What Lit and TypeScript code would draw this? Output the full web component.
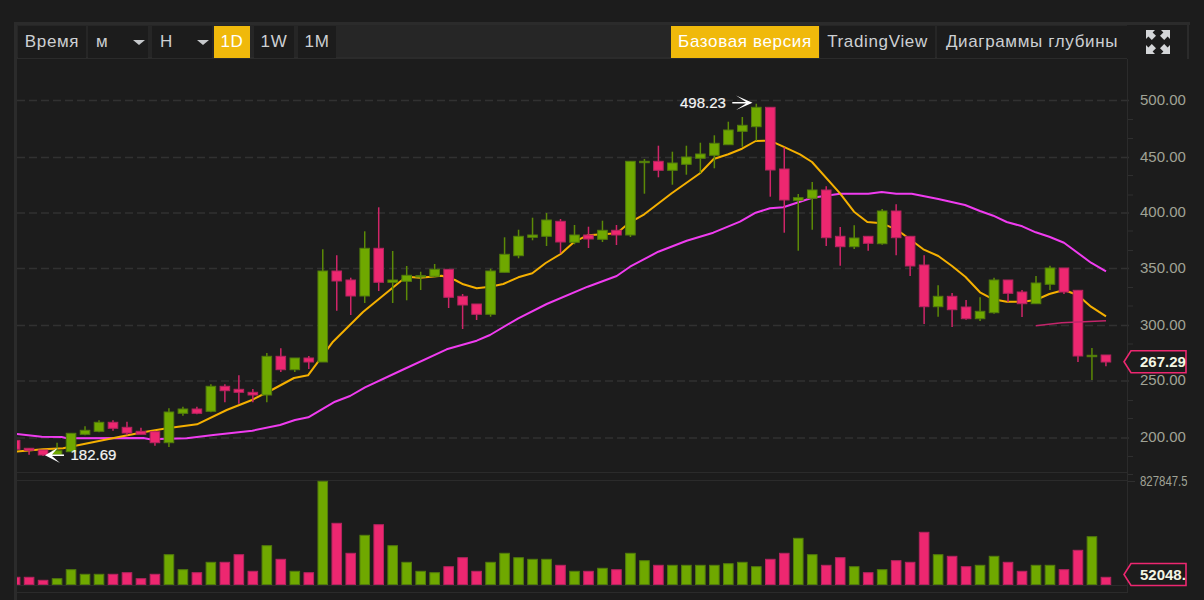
import { LitElement, html, svg, css } from "lit";
import { customElement } from "lit/decorators.js";

type C = [number, number, number, number, string];
const candles: C[] = [
  [440.3,449.3,440.3,449.3,"r"],[448.3,450.3,448.3,454.7,"r"],[450,455,450,456,"r"],[450.7,454.7,442.7,455,"g"],
  [433.3,451.7,433.3,451.7,"g"],[430.3,434.3,426.3,435.3,"g"],[422.3,431.3,420.3,432.3,"g"],[422.3,428.3,420.3,430.7,"r"],
  [427.3,433,421.7,435.3,"r"],[431.3,434.3,427.7,434.3,"r"],[431.7,442.7,430.7,445.7,"r"],[412,442.7,408.3,447,"g"],
  [409,413.3,406.7,415.7,"g"],[409,413.3,406.7,414.3,"r"],[386.3,411.3,384.3,412.3,"g"],[386.3,390.7,384.3,402.3,"r"],
  [389.3,392.3,375.3,403.7,"r"],[392.3,395,389,402.3,"r"],[356.3,395,353,402.3,"g"],[356.3,369.7,348.3,372,"r"],
  [358,369.7,358,372,"g"],[358,362,356,369,"r"],[271,362,249.3,362,"g"],[271,281,255.3,310.7,"r"],
  [280,296,277.7,315,"r"],[248.3,296,231.3,303,"g"],[248.3,282.3,207.3,291,"r"],[280,282.3,251,303,"g"],
  [275.3,281.3,266,300.3,"g"],[275.7,277,271.7,290,"g"],[269.3,276.3,264,277.3,"g"],[269.3,297.3,269.3,308,"r"],
  [296.3,305,294,329,"r"],[304,314.3,304,320,"r"],[271,314.3,268.7,316.7,"g"],[254.3,272.3,237.3,272.3,"g"],
  [236.3,255.7,229.7,258.3,"g"],[235,237.3,217.7,240.3,"g"],[220,236.3,213,246,"g"],[221.3,242,219,253.3,"r"],
  [235,242.3,225,244.3,"g"],[235,239,226.7,248,"r"],[230.3,239.3,220.7,242,"g"],[230.3,235,225,245,"r"],
  [161.3,235,161.3,237,"g"],[161.3,162.7,159,193.7,"g"],[161.3,170.3,145.7,177.3,"r"],[163,170.3,151.7,184.7,"g"],
  [157,164.3,145.7,174.7,"g"],[154,158.3,142.7,173.3,"g"],[143.3,155.3,135.3,168.3,"g"],[130,144.7,121.7,144.7,"g"],
  [125.3,131.3,117,146.7,"g"],[107.3,126.7,103.7,140.7,"g"],[107.3,170,107.3,196.7,"r"],[169,200,147.3,232.7,"r"],
  [197.7,200.3,194,250.7,"g"],[190,198.3,182,229.7,"g"],[190,237.7,186.3,246,"r"],[236.3,246.7,227,265.7,"r"],
  [238,246.7,225.3,249,"g"],[236.3,243.3,236.3,250.7,"r"],[211,243.7,209,244.7,"g"],[211,237.7,204.3,255.3,"r"],
  [236.3,266,236.3,276,"r"],[265,306.7,255.3,324,"r"],[296.3,306.7,285.3,316.7,"g"],[296.3,309.7,293,327,"r"],
  [307,318.7,300,319.7,"r"],[311.3,318.7,297.3,321,"g"],[280,312.7,277.7,313.7,"g"],[280,293.3,280,302,"r"],
  [292,303.7,290,317,"r"],[283,303.7,276,303.7,"g"],[268,284.3,265.7,290,"g"],[268,292,268,294,"r"],
  [290.3,356,290.3,362,"r"],[355.3,356.7,348,380,"g"],[355,362,355,366.3,"r"],
];
const volumes = [
  577.3,577.3,580.3,578.7,569.7,574.3,574.3,574.3,572.7,578.7,574.3,554.7,569.7,572.7,562.3,562.3,554.7,571.3,545.7,559.3,
  571.3,572.7,481.3,523.3,553.3,535.3,524.7,545.7,562.3,571.3,572.7,566.7,557.7,571.3,562.3,553.3,557.7,559.3,559.3,565.3,
  571.3,571.3,568.3,569.7,553.3,560.7,565.3,565.3,565.3,565.3,565.3,563.7,562.3,566.7,559.3,553.3,538.3,554.7,565.3,557.7,
  566.7,572.7,569.7,560.7,562.3,532.3,554.7,556.3,566.7,565.3,556.3,562.3,571.3,565.3,565.3,569.7,550.3,536.7,577.3,
];
const yellow = "16,451.7 43,449.3 63,448.3 120,436.7 143,432.3 167,428.3 197,424.3 226.7,410 252,400 271.7,390 294,378 308,375.3 333,341.7 363,312 400,281.7 406.7,276.7 420,277.7 441.7,275.7 455,280 463.3,284.3 476.7,288.3 490,286.7 503.3,284 518.3,277.3 532.3,273.3 545.7,263 560.7,254 574.3,241.7 587.7,235.3 602.7,234.3 616.7,233.3 630,222.3 644.3,214.3 671.7,193.3 700,173.3 713.7,159 728.3,154.3 742,148.7 755.7,141 770,140.7 783.3,146.7 800,154.3 812,162 840,193.3 854,211.7 867.3,222 881.7,223.3 896.3,229.3 910,239.3 923.3,249.3 938.3,256 952,266 965.3,276.7 980,292.3 993.3,299.3 1006.7,301.7 1022.3,301.7 1035.7,300 1049.3,294 1064,290 1077.7,295 1091,306.7 1106,316.3";
const magenta = "16,434 41.7,436.7 61.7,437 66.7,438.3 143.3,438 150,439.3 186.7,438.3 213.3,435 252.3,430.7 280,425 295,420 308.3,417.3 335,401.7 350,396 365,387.3 400,371 446.7,349.3 476.7,340.7 490,335 518.3,318.3 546.7,304 587.7,286.7 616.7,276 630,266.7 658.3,251.7 686.7,240.7 713.3,232.7 740,221.7 755.7,212.7 770,208.3 783.3,207.3 800,201.7 812.3,197.7 840,193.7 868.3,193.7 881.7,192 896.3,193.7 911.7,193.7 938.3,199 965,205 980,211 993.3,215.7 1006.7,222 1022.3,226.3 1035.7,232.3 1049.3,236.7 1064,242.7 1091,262.7 1106,271.3";
const grid: [number, string][] = [[100.5,"500.00"],[157.5,"450.00"],[213,"400.00"],[268.5,"350.00"],[325.5,"300.00"],[381,"250.00"],[438,"200.00"]];
const ticks = [119.5,138.5,175.5,195,231,250.5,287.5,306,344,400.5,418.5,456.5,474.5];
const cx = (i: number) => 15.1 + 13.985 * i;

@customElement("app-root")
export class AppRoot extends LitElement {
  static styles = css`
    :host { display: block; width: 1204px; height: 600px; overflow: hidden; background: #1c1c1c; }
    .frame { margin: 22px 0 0 14px; width: 1176px; height: 578px; border-left: 3px solid #2b2b2b; box-sizing: border-box; display: flex; flex-direction: column; }
    .toolbar { display: flex; height: 37px; flex: none; border-top: 3px solid #2b2b2b; box-sizing: border-box; font: 17px "Liberation Sans", Arial, sans-serif; letter-spacing: .65px; color: #cdd0d3; }
    .left { flex: none; width: 1110px; height: 34px; display: flex; background: #262626; border-bottom: 2px solid #2b2b2b; padding: 1px 0 0 1px; box-sizing: border-box; }
    .btn { height: 32px; background: #1c1c1c; display: flex; align-items: center; justify-content: center; flex: none; white-space: nowrap; }
    .on { background: #f0b90b; color: #fff; }
    .drop { justify-content: space-between; padding: 0 3px 0 8px; box-sizing: border-box; }
    .tri { width: 0; height: 0; border-left: 6px solid transparent; border-right: 6px solid transparent; border-top: 5px solid #c6c9cc; margin-top: 1px; }
    .spacer { flex: 1; }
    .cell { flex: none; width: 61px; height: 34px; margin-left: 1px; border-right: 2px solid #2b2b2b; box-sizing: border-box; display: flex; align-items: center; justify-content: center; }
    .cell svg { display: block; }
    .chart { display: block; flex: none; width: 1173px; height: 541px; }
    .w-8 { width: 68px; } .w-60 { width: 60px; } .w-36 { width: 36px; } .w-40 { width: 40px; } .w-38 { width: 38px; }
    .w-148 { width: 148px; } .w-115 { width: 115px; } .w-190 { width: 190px; }
    .ml2 { margin-left: 2px; } .ml4 { margin-left: 4px; } .ml1 { margin-left: 1px; }
    .sep { stroke: #2b2b2b; stroke-width: 1; fill: none; }
    .dash { stroke: #313131; stroke-width: 1.4; stroke-dasharray: 8 4; }
    .tick { stroke: #2f2f2f; stroke-width: 1; }
    .ma { fill: none; stroke-width: 2; stroke-linejoin: round; }
    .ma-y { stroke: #f5b000; } .ma-m { stroke: #f03cf0; stroke-width: 2; } .ma-d { stroke: #c2256a; stroke-width: 1.6; }
    .g rect { fill: #6fa800; stroke: #527c0c; } .g line { stroke: #5c8a06; }
    .r rect { fill: #ed2770; stroke: #b5245f; } .r line { stroke: #cf2568; }
    .wick { stroke-width: 1.5; }
    .lab { font: 15px "Liberation Sans", Arial, sans-serif; fill: #a0a396; }
    .lab-s { font: 15.5px "Liberation Sans", Arial, sans-serif; fill: #a0a396; }
    .tag { fill: #1c1c1c; stroke: #ed2770; stroke-width: 1.6; }
    .tagt { font: bold 15px "Liberation Sans", Arial, sans-serif; fill: #f4f6e4; }
    .note { font: 15px "Liberation Sans", Arial, sans-serif; fill: #f4f4f4; stroke: #f4f4f4; stroke-width: .2; }
    .arrow { fill: #fff; }
  `;

  private tag(y: number, text: string) {
    const t = y - 11, b = y + 11;
    return svg`<path class="tag" d="M1186 ${t}H1131L1124 ${y}L1131 ${b}H1186Z"></path>
      <text class="tagt" x="1140" y=${y + 5.3} clip-path="url(#tagclip)">${text}</text>`;
  }

  render() {
    return html`<div class="frame">
      <div class="toolbar">
        <div class="left">
          <div class="btn w-8">Время</div>
          <div class="btn drop w-60 ml2"><span>м</span><span class="tri"></span></div>
          <div class="btn drop w-60 ml4"><span>Н</span><span class="tri"></span></div>
          <div class="btn on w-36 ml2">1D</div>
          <div class="btn w-40 ml4">1W</div>
          <div class="btn w-38 ml4">1M</div>
          <div class="spacer"></div>
          <div class="btn on w-148">Базовая версия</div>
          <div class="btn w-115 ml1">TradingView</div>
          <div class="btn w-190 ml2">Диаграммы глубины</div>
        </div>
        <div class="cell">
          <svg width="24" height="24" viewBox="0 0 24 24" fill="#d4d6d8">
            <path d="M0 0H9L6.6 2.4L10 5.8L5.8 10L2.4 6.6L0 9Z"></path>
            <path d="M24 0H15L17.4 2.4L14 5.8L18.2 10L21.6 6.6L24 9Z"></path>
            <path d="M0 24H9L6.6 21.6L10 18.2L5.8 14L2.4 17.4L0 15Z"></path>
            <path d="M24 24H15L17.4 21.6L14 18.2L18.2 14L21.6 17.4L24 15Z"></path>
          </svg>
        </div>
      </div>
      ${this.chart()}
    </div>`;
  }

  private chart() {
    return html`<svg class="chart" viewBox="17 59 1173 541">
      <defs>
        <clipPath id="tagclip"><rect x="1120" y="340" width="66" height="250"></rect></clipPath>
        <clipPath id="axclip"><rect x="1130" y="470" width="57.5" height="20"></rect></clipPath>
      </defs>
      ${grid.map(([y]) => svg`<line class="dash" x1="17" x2="1133" y1=${y} y2=${y}></line>`)}
      ${ticks.map((y) => svg`<line class="tick" x1="1128" x2="1133" y1=${y} y2=${y}></line>`)}
      <line class="tick" x1="1128" x2="1135" y1="481.5" y2="481.5"></line>
      <line class="sep" x1="17" x2="1127" y1="472.5" y2="472.5"></line>
      <line class="sep" x1="17" x2="1127" y1="480.5" y2="480.5"></line>
      <line class="sep" x1="17" x2="1127" y1="585.5" y2="585.5"></line>
      <line class="sep" x1="17" x2="1127" y1="592.5" y2="592.5"></line>
      <line class="sep" x1="1127.5" x2="1127.5" y1="59" y2="593"></line>
      <polyline class="ma ma-m" points=${magenta}></polyline>
      <polyline class="ma ma-y" points=${yellow}></polyline>
      ${candles.map((c, i) => svg`<g class=${c[4]}>
        <line class="wick" x1=${cx(i)} x2=${cx(i)} y1=${c[2]} y2=${c[3]}></line>
        <rect x=${cx(i) - 4.8} width="9.6" y=${c[0]} height=${Math.max(c[1] - c[0], 1)}></rect>
      </g>`)}
      <polyline class="ma ma-d" points="1035.7,325.7 1061.7,322.7 1106,320.7"></polyline>
      ${volumes.map((y, i) => svg`<g class=${candles[i][4]}>
        <rect x=${cx(i) - 4.8} width="9.6" y=${y} height=${584.5 - y}></rect>
      </g>`)}
      ${grid.map(([y, t]) => svg`<text class="lab" x="1140" y=${y + 4}>${t}</text>`)}
      <text class="lab-s" x="1140" y="486" textLength="54" lengthAdjust="spacingAndGlyphs" clip-path="url(#axclip)">827847.56</text>
      ${this.tag(361.7, "267.29")}
      ${this.tag(574.5, "52048.32")}
      <text class="note" x="680" y="107.5">498.23</text>
      <path class="arrow" d="M752.5 102.7L736 95.5L746 102H732.3V103.4H746L736 110Z"></path>
      <text class="note" x="70.5" y="460">182.69</text>
      <path class="arrow" d="M45 455.3L58 447.7L52 454.6H64V456H52L60 463Z"></path>
    </svg>`;
  }
}
